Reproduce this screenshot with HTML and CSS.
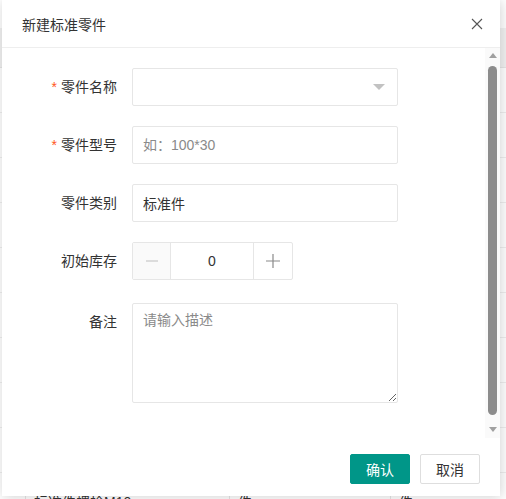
FILE: index.html
```html
<!DOCTYPE html>
<html lang="zh-CN">
<head>
<meta charset="utf-8">
<title>新建标准零件</title>
<link rel="stylesheet" href="styles.css">
</head>
<body>
<div class="page">
  <div class="grid-head"></div>
  <div class="grid-row"></div>
  <div class="grid-row"></div>
  <div class="grid-row"></div>
  <div class="grid-row"></div>
  <div class="grid-row"></div>
  <div class="grid-row"></div>
  <div class="grid-row"></div>
  <div class="grid-row"></div>
  <div class="grid-row"></div>
  <div class="grid-row cells">
    <span class="cell c1">标准件螺栓M10</span>
    <span class="cell c2">件</span>
    <span class="cell c3">件</span>
  </div>
</div>

<div class="dialog">
  <div class="dlg-head">
    <span class="dlg-title">新建标准零件</span>
    <svg class="dlg-close" width="12" height="12" viewBox="0 0 12 12"><path d="M1 1 L11 11 M11 1 L1 11" stroke="#555" stroke-width="1.1" fill="none"/></svg>
  </div>
  <div class="dlg-body">
    <div class="form">
      <div class="item">
        <label class="label"><span class="req">*</span>零件名称</label>
        <div class="select">
          <span class="caret"></span>
        </div>
      </div>
      <div class="item">
        <label class="label"><span class="req">*</span>零件型号</label>
        <input class="input" type="text" placeholder="如：100*30">
      </div>
      <div class="item">
        <label class="label">零件类别</label>
        <input class="input" type="text" value="标准件">
      </div>
      <div class="item">
        <label class="label">初始库存</label>
        <div class="number">
          <span class="nbtn minus"><svg width="12" height="12" viewBox="0 0 12 12"><path d="M0 6 H12" stroke="#c8c8c8" stroke-width="1.2"/></svg></span>
          <span class="nval">0</span>
          <span class="nbtn plus"><svg width="14" height="14" viewBox="0 0 14 14"><path d="M0 7 H14 M7 0 V14" stroke="#8a8a8a" stroke-width="1.2"/></svg></span>
        </div>
      </div>
      <div class="item item-area">
        <label class="label">备注</label>
        <textarea class="textarea" placeholder="请输入描述"></textarea>
      </div>
    </div>
    <div class="scrollbar">
      <span class="arrow up"></span>
      <span class="thumb"></span>
      <span class="arrow down"></span>
    </div>
  </div>
  <div class="dlg-foot">
    <button class="btn primary">确认</button>
    <button class="btn">取消</button>
  </div>
</div>
</body>
</html>
```

FILE: styles.css
```css
* { box-sizing: border-box; }
html, body { margin: 0; padding: 0; }
body {
  width: 506px;
  height: 499px;
  overflow: hidden;
  background: #fff;
  font-family: "Liberation Sans", "Noto Sans CJK SC", sans-serif;
  font-size: 14px;
  color: #333;
  position: relative;
}

/* background page */
.page { padding-top: 28px; }
.grid-head { height: 40px; background: #f2f2f2; border-bottom: 1px solid #e6e6e6; }
.grid-row { height: 45px; border-bottom: 1px solid #eee; }
.cells { display: flex; position: relative; height: 60px; }
.cell { font-size: 14px; line-height: 20px; color: #333; padding-top: 19px; border-left: 1px solid #e6e6e6; }
.c1 { margin-left: 25px; width: 204px; padding-left: 8px; }
.c2 { width: 161px; padding-left: 8px; }
.c3 { flex: 1; padding-left: 8px; }

/* dialog */
.dialog {
  position: absolute;
  left: 2px;
  top: 0;
  width: 498px;
  height: 496px;
  background: #fff;
  box-shadow: 1px 1px 12px rgba(0,0,0,.18);
  display: flex;
  flex-direction: column;
}
.dlg-head {
  height: 48px;
  border-bottom: 1px solid #eee;
  display: flex;
  align-items: center;
  justify-content: space-between;
  padding: 0 17px 0 20px;
  flex: none;
}
.dlg-title { font-size: 14px; color: #333; }
.dlg-close { display: block; }

.dlg-body {
  height: 390px;
  display: flex;
  flex: none;
}
.form {
  flex: 1;
  padding: 20px 0 0 20px;
  display: flex;
  flex-direction: column;
  gap: 20px;
}
.item { display: flex; align-items: flex-start; }
.item-area { margin-top: 3px; }
.label {
  width: 110px;
  padding: 9px 15px 9px 0;
  line-height: 20px;
  text-align: right;
  color: #333;
  font-size: 14px;
}
.req { color: #ff5722; margin-right: 4px; font-size: 14px; }

.select, .input, .textarea {
  width: 266px;
  height: 38px;
  border: 1px solid #e6e6e6;
  border-radius: 2px;
  background: #fff;
}
.select { position: relative; }
.caret {
  position: absolute;
  right: 12px;
  top: 15px;
  width: 0; height: 0;
  border-left: 6px solid transparent;
  border-right: 6px solid transparent;
  border-top: 6px solid #c2c2c2;
}
.input {
  padding: 0 10px;
  font-family: inherit;
  font-size: 14px;
  color: #333;
  outline: none;
}
.input::placeholder, .textarea::placeholder { color: #8a8a8a; }

.number {
  display: flex;
  height: 38px;
  border: 1px solid #e6e6e6;
  border-radius: 2px;
}
.nbtn {
  width: 38px;
  display: flex;
  align-items: center;
  justify-content: center;
}
.minus { background: #fafafa; border-right: 1px solid #e6e6e6; width: 38px; }
.plus { border-left: 1px solid #e6e6e6; width: 39px; }
.nval {
  width: 82px;
  display: flex;
  align-items: center;
  justify-content: center;
  font-size: 14px;
  color: #333;
}

.textarea {
  height: 100px;
  padding: 6px 10px;
  line-height: 20px;
  font-family: inherit;
  font-size: 14px;
  resize: vertical;
  outline: none;
}

/* fake scrollbar */
.scrollbar {
  width: 15px;
  flex: none;
  background: #fafafa;
  display: flex;
  flex-direction: column;
  align-items: center;
  padding: 5px 0 6px;
}
.arrow { width: 0; height: 0; border-left: 4.5px solid transparent; border-right: 4.5px solid transparent; }
.arrow.up { border-bottom: 5px solid #a0a0a0; }
.arrow.down { border-top: 5px solid #a0a0a0; }
.thumb {
  width: 9px;
  height: 350px;
  margin: 8px 0 12px;
  border-radius: 5px;
  background: #8c8c8c;
}

.dlg-foot {
  flex: 1;
  display: flex;
  justify-content: flex-end;
  align-items: flex-start;
  gap: 10px;
  padding: 16px 20px 0 0;
}
.btn {
  width: 60px;
  height: 30px;
  border: 1px solid #dedede;
  border-radius: 2px;
  background: #fff;
  color: #333;
  font-family: inherit;
  font-size: 14px;
  padding: 0;
}
.btn.primary { background: #009688; border-color: #009688; color: #fff; }
```
